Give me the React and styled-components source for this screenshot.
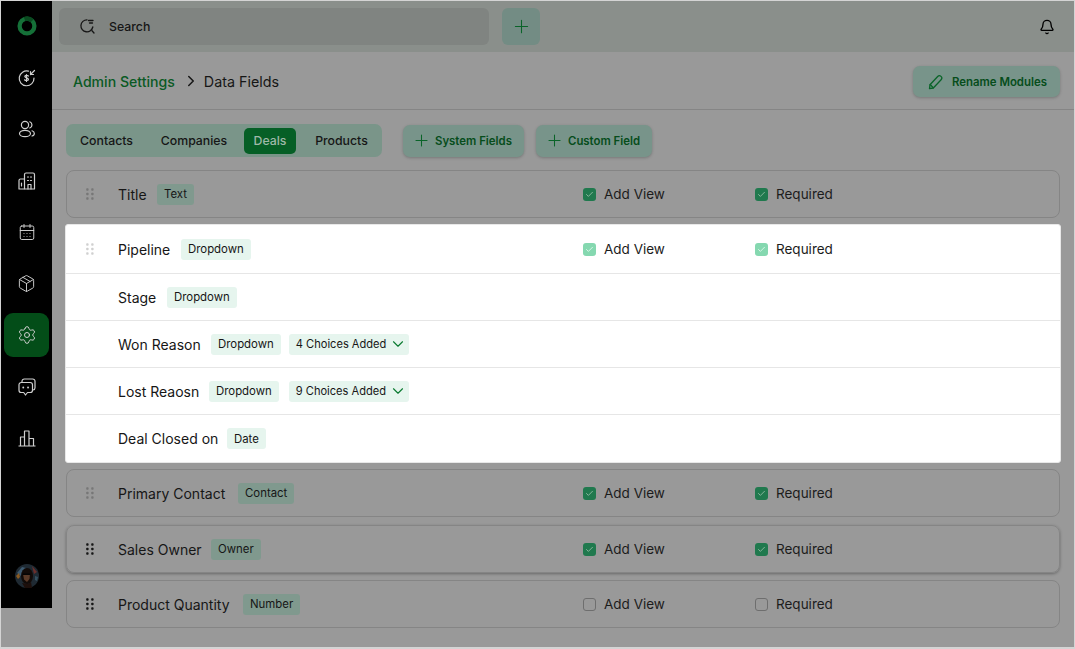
import React from 'react';
import styled, { createGlobalStyle } from 'styled-components';
import { Bell, CalendarDays, Check, ChevronDown, ChevronRight, Package, Plus, Settings } from 'lucide-react';

const GlobalStyle = createGlobalStyle`
  html, body {
    margin: 0;
    padding: 0;
    background: #d4d4d4;
    font-family: Inter, "Noto Sans", sans-serif;
    color: #161616;
  }
  * { box-sizing: border-box; }
`;

const Page = styled.div`
  width: 1075px;
  height: 649px;
  padding: 1px 1px 2px 1px;
  overflow: hidden;
`;

const Shell = styled.div`
  display: flex;
  height: 100%;
  background: #999999;
`;

const Sidebar = styled.nav`
  width: 51px;
  height: 607px;
  flex: none;
  background: #000;
  display: flex;
  flex-direction: column;
  align-items: center;
  padding: 3px 0 19px;
  gap: 7.5px;
`;

const NavItem = styled.div`
  width: 45px;
  height: 44px;
  flex: none;
  display: flex;
  align-items: center;
  justify-content: center;
  border-radius: 9px;
  color: #cfcfcf;
  background: ${(props) => (props.$active ? '#034d18' : 'transparent')};
`;

const AvatarSlot = styled.div`
  margin-top: auto;
  width: 24px;
  height: 24px;
  margin-bottom: 1px;
`;

const Main = styled.main`
  flex: 1;
  min-width: 0;
`;

const Header = styled.header`
  height: 51px;
  background: #8a8f8b;
  display: flex;
  align-items: center;
  padding: 0 19px 0 7px;
`;

const Search = styled.div`
  width: 430px;
  height: 37px;
  border-radius: 6px;
  background: #808481;
  display: flex;
  align-items: center;
  gap: 13px;
  padding-left: 20px;
  font-size: 12.3px;
  font-weight: 500;
  color: #161616;
`;

const SquareButton = styled.div`
  width: 38px;
  height: 37px;
  margin-left: 13px;
  border-radius: 6px;
  background: #738c84;
  color: #0a6429;
  display: flex;
  align-items: center;
  justify-content: center;
`;

const BellWrap = styled.div`
  margin-left: auto;
  display: flex;
  color: #000;
`;

const TitleBar = styled.div`
  height: 58px;
  padding: 1px 14px 0 21px;
  border-bottom: 1px solid #858585;
  display: flex;
  align-items: center;
`;

const Crumb = styled.span`
  font-size: 14.1px;
  font-weight: 500;
  color: #0a5a24;
`;

const CrumbCurrent = styled.span`
  font-size: 14.3px;
  color: #161616;
`;

const CrumbArrow = styled.span`
  display: flex;
  margin: 0 4px 0 7px;
  color: #161616;
`;

const ActionButton = styled.div`
  display: flex;
  align-items: center;
  border-radius: 7px;
  background: #78948a;
  box-shadow: 0 1px 3px rgba(0, 0, 0, 0.22);
  color: #064d1b;
  font-size: 11.4px;
  font-weight: 600;
  white-space: nowrap;
  svg { color: #0a6429; }
`;

const RenameButton = styled(ActionButton)`
  margin-left: auto;
  margin-top: 1px;
  width: 147px;
  height: 31px;
  gap: 8px;
  padding-left: 15px;
`;

const FieldButton = styled(ActionButton)`
  width: ${(props) => props.$width}px;
  height: 32px;
  gap: 4px;
  padding-left: 9px;
`;

const Content = styled.div`
  padding: 14px 14px 0 14px;
`;

const ToolRow = styled.div`
  display: flex;
  align-items: center;
  height: 33px;
  margin-bottom: 13px;
`;

const Tabs = styled.div`
  width: 316px;
  height: 33px;
  border-radius: 7px;
  background: #7a9589;
  display: flex;
  align-items: center;
  padding: 0 0 0 3px;
  margin-right: 21px;
`;

const Tab = styled.div`
  height: 26px;
  flex: none;
  display: flex;
  align-items: center;
  justify-content: center;
  width: ${(props) => props.$width}px;
  padding-left: ${(props) => props.$inset || 0}px;
  border-radius: 5px;
  font-size: 12.3px;
  font-weight: 500;
  color: ${(props) => (props.$active ? '#9fb8a8' : '#161616')};
  background: ${(props) => (props.$active ? '#065f26' : 'transparent')};
`;

const FieldButtons = styled.div`
  display: flex;
  gap: 12px;
`;

const FieldList = styled.div`
  display: flex;
  flex-direction: column;
`;

const Row = styled.div`
  display: grid;
  grid-template-columns: 516px 172px 1fr;
  align-items: center;
  height: 48px;
  margin-bottom: ${(props) => props.$gap}px;
  border: 1px solid #858585;
  border-radius: 8px;
  box-shadow: ${(props) => (props.$raised ? '0 1px 3px rgba(0,0,0,0.32)' : 'none')};
`;

const LitPanel = styled.div`
  width: 996px;
  margin: 0 0 6px -1px;
  background: #fff;
  border: 1px solid #e8e8e8;
  border-radius: 3px;
`;

const LitRow = styled.div`
  display: grid;
  grid-template-columns: 516px 172px 1fr;
  align-items: center;
  height: ${(props) => props.$height}px;
  padding-left: 1px;
  border-bottom: ${(props) => (props.$last ? 'none' : '1px solid #e6e6e6')};
`;

const NameCell = styled.div`
  display: flex;
  align-items: center;
  padding-left: 19px;
`;

const HandleSlot = styled.div`
  width: 32px;
  flex: none;
  display: flex;
`;

const FieldName = styled.span`
  width: ${(props) => props.$width}px;
  flex: none;
  font-size: 14px;
  color: #161616;
  white-space: nowrap;
`;

const Tag = styled.span`
  height: 21px;
  padding: 0 7px;
  border-radius: 3px;
  display: inline-flex;
  align-items: center;
  font-size: 11.4px;
  color: #161616;
  white-space: nowrap;
  background: ${(props) => (props.$lit ? '#e6f5ee' : '#80998e')};
`;

const ChoiceTag = styled(Tag)`
  margin-left: ${(props) => props.$gap}px;
  padding: 0 2px 0 7px;
  gap: 3px;
  font-size: 11.1px;
  svg { color: #0a7a30; }
`;

const CheckCell = styled.div`
  display: flex;
  align-items: center;
  gap: 8px;
  font-size: 13.5px;
  color: #1c1c1c;
`;

const CheckBox = styled.span`
  width: 13px;
  height: 13px;
  border-radius: 3px;
  flex: none;
  display: flex;
  align-items: center;
  justify-content: center;
  background: ${(props) => (!props.$checked ? 'transparent' : props.$lit ? '#85d8b0' : '#20794e')};
  border: ${(props) => (props.$checked ? 'none' : '1.2px solid #6e6e6e')};
  color: ${(props) => (props.$lit ? '#f2fff8' : '#a8c8b4')};
`;

function Logo() {
  return (
    <svg width="22" height="22" viewBox="0 0 22 22">
      <circle cx="11" cy="11" r="7.4" fill="none" stroke="#157038" strokeWidth="4.3" />
      <path d="M8.5 4A7.4 7.4 0 0 1 16.2 5.8" fill="none" stroke="#0a4a20" strokeWidth="4.3" />
    </svg>
  );
}

function DealIcon() {
  return (
    <svg width="20" height="20" viewBox="0 0 20 20" fill="none" stroke="currentColor" strokeWidth="1.2" strokeLinecap="round">
      <path d="M11.5 3.2A7.4 7.4 0 1 0 17 10" />
      <path d="M9.5 6.5v7M11.4 8c-.5-.8-3.6-1-3.6.6 0 1.7 3.6.9 3.6 2.8 0 1.5-3.2 1.3-3.8.4" />
      <path d="M17.5 2.5l-4 4M13.5 3.5v3h3" />
    </svg>
  );
}

function PeopleIcon() {
  return (
    <svg width="20" height="20" viewBox="0 0 20 20" fill="none" stroke="currentColor" strokeWidth="1.2" strokeLinecap="round">
      <circle cx="8" cy="6" r="3.6" />
      <ellipse cx="8" cy="14.5" rx="5.5" ry="3.2" />
      <path d="M12.8 2.8a3.3 3.3 0 0 1 0 6.2M15 11.8c3 .9 3.2 4.4 0 5.2" />
    </svg>
  );
}

function BuildingIcon() {
  return (
    <svg width="20" height="20" viewBox="0 0 20 20" fill="none" stroke="currentColor" strokeWidth="1.2" strokeLinejoin="round">
      <path d="M7.5 18V3.5A1.5 1.5 0 0 1 9 2h7a1.5 1.5 0 0 1 1.5 1.5V18z" />
      <path d="M7.5 8H3.5A1.5 1.5 0 0 0 2 9.5V18h5.5" />
      <path d="M10.5 6h1M13.5 6h1M10.5 9.5h1M13.5 9.5h1M11 18v-4.5h3V18M4.5 12v3" strokeLinecap="round" />
    </svg>
  );
}

function ChatIcon() {
  return (
    <svg width="20" height="20" viewBox="0 0 20 20" fill="none" stroke="currentColor" strokeWidth="1.2" strokeLinecap="round" strokeLinejoin="round">
      <path d="M5 5.5V4.3A2.3 2.3 0 0 1 7.3 2h8.4A2.3 2.3 0 0 1 18 4.3v6.4a2.3 2.3 0 0 1-2 2.3" />
      <path d="M4.3 5.5h8.9a2.3 2.3 0 0 1 2.3 2.3v5.4a2.3 2.3 0 0 1-2.3 2.3h-2.7L8.5 18l-1.8-2.5H4.3A2.3 2.3 0 0 1 2 13.2V7.8a2.3 2.3 0 0 1 2.3-2.3z" />
      <path d="M6.2 10.5h.1M11 10.5h.1" strokeWidth="1.8" />
    </svg>
  );
}

function ChartIcon() {
  return (
    <svg width="20" height="20" viewBox="0 0 20 20" fill="none" stroke="currentColor" strokeWidth="1.2" strokeLinejoin="round">
      <path d="M1.5 18h17M3.5 18V9h4v9M7.5 18V3h4.5v15M12 18v-7.5h4.5V18" />
    </svg>
  );
}

function SearchIcon() {
  return (
    <svg width="17" height="17" viewBox="0 0 17 17" fill="none" stroke="#161616" strokeWidth="1.3" strokeLinecap="round">
      <path d="M8 1.8A6 6 0 1 0 13.8 9" />
      <path d="M13 12.8l2 2.2M9.5 2.5h4.5M10.5 5h3" />
    </svg>
  );
}

function PencilIcon() {
  return (
    <svg width="16" height="16" viewBox="0 0 16 16" fill="none" stroke="currentColor" strokeWidth="1.3" strokeLinejoin="round" strokeLinecap="round">
      <path d="M1.5 14.7l.5-4 7.7-8.2a2.3 2.3 0 0 1 3.4 3.2L5.3 14z" />
      <path d="M2.2 10.5l3 3.3" />
    </svg>
  );
}

function Avatar() {
  return (
    <svg width="24" height="24" viewBox="0 0 24 24">
      <circle cx="12" cy="12" r="12" fill="#1f2a33" />
      <path d="M2 9l5-6 4 1-5 8z" fill="#3d5a70" />
      <path d="M1 12l3-3 1 4-2 2z" fill="#8a5a22" />
      <path d="M17 2l5 6-3 2z" fill="#6b2f2c" />
      <path d="M20 12l3 1-1 4-2-1z" fill="#34505f" />
      <ellipse cx="12" cy="12" rx="6" ry="8" fill="#120b08" />
      <path d="M8 10h7l-.5 5-2.5 3-3-2.5z" fill="#5a3a28" />
      <path d="M7.5 9.5h8V11h-8z" fill="#050505" />
      <path d="M7 19l3 5h7l-1-6-3 2z" fill="#1d0f0b" />
    </svg>
  );
}

function Handle({ tone }) {
  const fill = { dark: '#161616', mid: '#777', light: '#d0d0d0' }[tone];
  return (
    <svg width="8" height="12" viewBox="0 0 8 12" fill={fill}>
      {[1.5, 6, 10.5].map((cy) => (
        <React.Fragment key={cy}>
          <rect x="0.2" y={cy - 1.2} width="2.4" height="2.4" rx="0.8" />
          <rect x="5.2" y={cy - 1.2} width="2.4" height="2.4" rx="0.8" />
        </React.Fragment>
      ))}
    </svg>
  );
}

function CheckItem({ label, checked, lit }) {
  return (
    <CheckCell>
      <CheckBox $checked={checked} $lit={lit}>
        {checked && <Check size={9} strokeWidth={2} />}
      </CheckBox>
      {label}
    </CheckCell>
  );
}

const navIcons = [
  <Logo />,
  <DealIcon />,
  <PeopleIcon />,
  <BuildingIcon />,
  <CalendarDays size={18} strokeWidth={1.3} />,
  <Package size={19} strokeWidth={1.2} />,
  <Settings size={20} strokeWidth={1.2} />,
  <ChatIcon />,
  <ChartIcon />,
];

const litRows = [
  { name: 'Stage', nameWidth: 49, type: 'Dropdown', height: 47 },
  { name: 'Won Reason', nameWidth: 93, type: 'Dropdown', choices: '4 Choices Added', choiceGap: 8, height: 47 },
  { name: 'Lost Reaosn', nameWidth: 91, type: 'Dropdown', choices: '9 Choices Added', choiceGap: 10, height: 47 },
  { name: 'Deal Closed on', nameWidth: 109, type: 'Date', height: 47, last: true },
];

const lowerRows = [
  { name: 'Primary Contact', nameWidth: 120, type: 'Contact', tone: 'mid', checked: true, gap: 8 },
  { name: 'Sales Owner', nameWidth: 93, type: 'Owner', tone: 'dark', checked: true, gap: 7, raised: true },
  { name: 'Product Quantity', nameWidth: 125, type: 'Number', tone: 'dark', checked: false, gap: 0 },
];

function DimRow({ name, nameWidth, type, tone, checked, gap, raised }) {
  return (
    <Row $gap={gap} $raised={raised}>
      <NameCell>
        <HandleSlot><Handle tone={tone} /></HandleSlot>
        <FieldName $width={nameWidth}>{name}</FieldName>
        <Tag>{type}</Tag>
      </NameCell>
      <CheckItem label="Add View" checked={checked} />
      <CheckItem label="Required" checked={checked} />
    </Row>
  );
}

export default function App() {
  return (
    <Page>
      <GlobalStyle />
      <Shell>
        <Sidebar>
          {navIcons.map((icon, i) => (
            <NavItem key={i} $active={i === 6}>{icon}</NavItem>
          ))}
          <AvatarSlot><Avatar /></AvatarSlot>
        </Sidebar>
        <Main>
          <Header>
            <Search><SearchIcon />Search</Search>
            <SquareButton><Plus size={21} strokeWidth={1.2} /></SquareButton>
            <BellWrap><Bell size={16} strokeWidth={2} /></BellWrap>
          </Header>
          <TitleBar>
            <Crumb>Admin Settings</Crumb>
            <CrumbArrow><ChevronRight size={18} strokeWidth={2} /></CrumbArrow>
            <CrumbCurrent>Data Fields</CrumbCurrent>
            <RenameButton><PencilIcon />Rename Modules</RenameButton>
          </TitleBar>
          <Content>
            <ToolRow>
              <Tabs>
                <Tab $width={75}>Contacts</Tab>
                <Tab $width={100}>Companies</Tab>
                <Tab $width={52} $active>Deals</Tab>
                <Tab $width={86} $inset={5}>Products</Tab>
              </Tabs>
              <FieldButtons>
                <FieldButton $width={121}><Plus size={19} strokeWidth={1.3} />System Fields</FieldButton>
                <FieldButton $width={116}><Plus size={19} strokeWidth={1.3} />Custom Field</FieldButton>
              </FieldButtons>
            </ToolRow>
            <FieldList>
              <DimRow name="Title" nameWidth={39} type="Text" tone="mid" checked gap={6} />
              <LitPanel>
                <LitRow $height={49}>
                  <NameCell>
                    <HandleSlot><Handle tone="light" /></HandleSlot>
                    <FieldName $width={63}>Pipeline</FieldName>
                    <Tag $lit>Dropdown</Tag>
                  </NameCell>
                  <CheckItem label="Add View" checked lit />
                  <CheckItem label="Required" checked lit />
                </LitRow>
                {litRows.map((row) => (
                  <LitRow key={row.name} $height={row.height} $last={row.last}>
                    <NameCell>
                      <HandleSlot />
                      <FieldName $width={row.nameWidth}>{row.name}</FieldName>
                      <Tag $lit>{row.type}</Tag>
                      {row.choices && (
                        <ChoiceTag $lit $gap={row.choiceGap}>{row.choices}<ChevronDown size={18} strokeWidth={1.5} /></ChoiceTag>
                      )}
                    </NameCell>
                  </LitRow>
                ))}
              </LitPanel>
              {lowerRows.map((row) => <DimRow key={row.name} {...row} />)}
            </FieldList>
          </Content>
        </Main>
      </Shell>
    </Page>
  );
}
